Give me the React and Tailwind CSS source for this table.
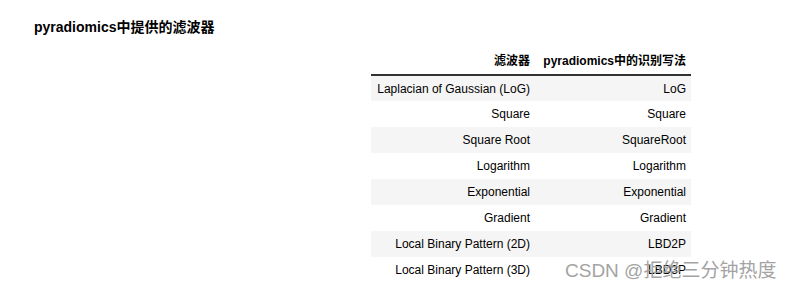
import React from "react";

const ROWS = [
  ["Laplacian of Gaussian (LoG)", "LoG"],
  ["Square", "Square"],
  ["Square Root", "SquareRoot"],
  ["Logarithm", "Logarithm"],
  ["Exponential", "Exponential"],
  ["Gradient", "Gradient"],
  ["Local Binary Pattern (2D)", "LBD2P"],
  ["Local Binary Pattern (3D)", "LBD3P"],
];

const FONT = { fontFamily: '"Liberation Sans", Arial, "Noto Sans CJK SC", sans-serif' };

export default function App() {
  return (
    <div
      className="relative w-[792px] h-[296px] bg-white text-black overflow-hidden"
      style={FONT}
    >
      <div className="pl-[34px] pt-[18px] text-[14px] font-bold leading-[18px]">
        pyradiomics中提供的滤波器
      </div>
      <div className="flex justify-end pr-[101px] pt-[12px]">
        <table className="w-[320px] border-collapse text-[12px]">
          <thead>
            <tr className="h-[27px] border-b-2 border-[#333]">
              <th className="w-[164px] pr-[5px] text-right font-bold">滤波器</th>
              <th className="pr-[5px] text-right font-bold">pyradiomics中的识别写法</th>
            </tr>
          </thead>
          <tbody>
            {ROWS.map(([a, b], i) => (
              <tr key={a} className={`h-[26px] ${i % 2 === 0 ? "bg-[#f5f5f5]" : "bg-white"}`}>
                <td className="pr-[5px] text-right">{a}</td>
                <td className="pr-[5px] text-right">{b}</td>
              </tr>
            ))}
          </tbody>
        </table>
      </div>
      <div className="absolute left-[565px] top-[259px] text-[19px] leading-[24px] text-[#9a9a9a] opacity-90">
        CSDN @拒绝三分钟热度
      </div>
    </div>
  );
}
